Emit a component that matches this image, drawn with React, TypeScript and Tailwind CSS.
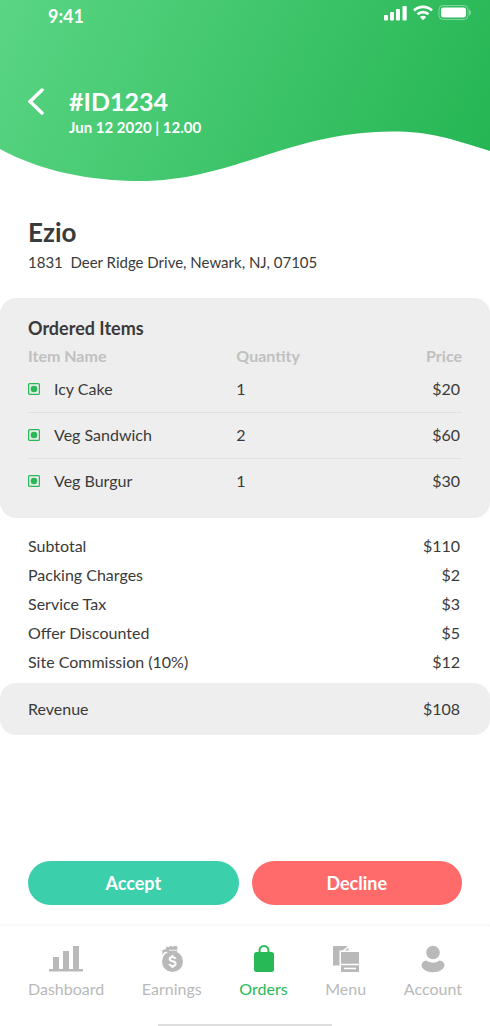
import { ReactNode } from "react"

interface OrderItem {
  name: string
  quantity: number
  price: string
}

interface NavItem {
  label: string
  icon: ReactNode
  active?: boolean
}

const items: OrderItem[] = [
  { name: "Icy Cake", quantity: 1, price: "$20" },
  { name: "Veg Sandwich", quantity: 2, price: "$60" },
  { name: "Veg Burgur", quantity: 1, price: "$30" },
]

const charges = [
  { label: "Subtotal", amount: "$110" },
  { label: "Packing Charges", amount: "$2" },
  { label: "Service Tax", amount: "$3" },
  { label: "Offer Discounted", amount: "$5" },
  { label: "Site Commission (10%)", amount: "$12" },
]

const DashboardIcon = () => (
  <svg width="34" height="28" viewBox="0 0 34 28" fill="currentColor" aria-hidden="true">
    <rect x="0" y="24" width="34" height="2.5" />
    <rect x="4" y="12" width="6" height="13" />
    <rect x="14" y="6" width="6" height="19" />
    <rect x="24" y="1" width="6" height="24" />
  </svg>
)

const EarningsIcon = () => (
  <svg width="24" height="28" viewBox="0 0 24 28" fill="currentColor" aria-hidden="true">
    <path d="M6.500 1.500l2 .8 2-1.500 2 1 2.200-1 2.800.7-.5 5.500H8.500L5 6.800 2 9.500l.6-3L1.500 5.800l4.500-2z" />
    <circle cx="12.500" cy="16.500" r="10.500" />
    <path d="M9 5.300h8" stroke="#fff" strokeWidth=".8" />
    <path
      d="M15.500 13.800c-.5-1.300-1.600-1.900-3-1.900-1.700 0-2.800.8-2.800 2.100 0 3 5.900 1.500 5.900 4.700 0 1.400-1.200 2.300-3 2.300-1.600 0-2.800-.7-3.300-2M12.500 10v2M12.500 21v2"
      fill="none"
      stroke="#fff"
      strokeWidth="2"
    />
  </svg>
)

const OrdersIcon = () => (
  <svg width="22" height="28" viewBox="0 0 22 28" aria-hidden="true">
    <rect x="1" y="7" width="20" height="20" rx="2.500" fill="currentColor" />
    <path d="M6.500 9V5.500a4.500 4.500 0 0 1 9 0V9" fill="none" stroke="currentColor" strokeWidth="2" />
  </svg>
)

const MenuIcon = () => (
  <svg width="28" height="28" viewBox="0 0 28 28" fill="currentColor" aria-hidden="true">
    <path d="M1 1h14.500v.5L10.500 5.500H7.500v15H1z" />
    <path d="M16.500 2.500V5.500h-3.500z" />
    <path d="M9 7h18v20H9z" />
    <path d="M9 19.500h18M12 23.500h12" stroke="#fff" strokeWidth="1.500" />
  </svg>
)

const AccountIcon = () => (
  <svg width="24" height="28" viewBox="0 0 24 28" fill="currentColor" aria-hidden="true">
    <circle cx="12" cy="7.500" r="6.800" />
    <path d="M5.500 15.500c2 1.400 4 2 6.500 2s4.500-.6 6.500-2c3 .4 5 2.200 5 4.500 0 4-5 7.200-11.500 7.200S.5 24 .5 20c0-2.300 2-4.100 5-4.500z" />
  </svg>
)

const VegMark = () => (
  <svg width="12" height="12" viewBox="0 0 12 12" aria-hidden="true">
    <rect x=".6" y=".6" width="10.800" height="10.800" rx="1" fill="none" stroke="#27b955" strokeWidth="1.200" />
    <circle cx="6" cy="6" r="3.300" fill="#27b955" />
  </svg>
)

const navItems: NavItem[] = [
  { label: "Dashboard", icon: <DashboardIcon /> },
  { label: "Earnings", icon: <EarningsIcon /> },
  { label: "Orders", icon: <OrdersIcon />, active: true },
  { label: "Menu", icon: <MenuIcon /> },
  { label: "Account", icon: <AccountIcon /> },
]

const StatusBar = () => (
  <div className="flex items-start justify-between pt-1 pr-[18px] pl-12">
    <span className="text-lg leading-6 font-bold">9:41</span>
    <div className="flex items-center gap-1">
      <svg width="25" height="18" viewBox="0 0 25 18" fill="currentColor" aria-hidden="true">
        <rect x="1" y="11" width="4" height="5.500" rx="1" />
        <rect x="7" y="8" width="4" height="8.500" rx="1" />
        <rect x="13" y="5" width="4" height="11.500" rx="1" />
        <rect x="19.500" y="2" width="4.200" height="14.500" rx="1" />
      </svg>
      <svg width="22" height="18" viewBox="0 0 22 18" aria-hidden="true">
        <path d="M2 6.500a13 13 0 0 1 18 0M5.500 10.300a8 8 0 0 1 11 0" fill="none" stroke="currentColor" strokeWidth="2.600" />
        <path d="M11 16.200l-3.100-3.100a4.500 4.500 0 0 1 6.200 0z" fill="currentColor" />
      </svg>
      <svg width="34" height="18" viewBox="0 0 34 18" aria-hidden="true">
        <rect x="1" y="1.500" width="29" height="14" rx="4" fill="none" stroke="currentColor" strokeOpacity=".4" />
        <rect x="3" y="3.500" width="25" height="10" rx="2.500" fill="currentColor" />
        <path d="M31 5.500v6c1.300-.5 2-1.600 2-3s-.7-2.500-2-3z" fill="currentColor" fillOpacity=".4" />
      </svg>
    </div>
  </div>
)

const Header = () => (
  <header className="bg-[linear-gradient(115deg,#5ad584,#24b552)] text-white">
    <StatusBar />
    <div className="flex items-start gap-6 px-7 pt-[57px]">
      <button type="button" aria-label="Back" className="mt-0.5 cursor-pointer">
        <svg width="17" height="28" viewBox="0 0 17 28" aria-hidden="true">
          <path d="M14 3L2 14.500 14 26" fill="none" stroke="currentColor" strokeWidth="3.500" strokeLinecap="round" />
        </svg>
      </button>
      <div>
        <h1 className="text-[25px] leading-8 font-bold">#ID1234</h1>
        <p className="text-[15px] leading-5 font-bold">Jun 12 2020 | 12.00</p>
      </div>
    </div>
    {/* white wave that closes the header */}
    <svg viewBox="0 0 490 54" preserveAspectRatio="none" className="-mt-2 block h-[54px] w-full" aria-hidden="true">
      <path d="M0 20C40 42 90 52 140 52C232 52 290 2.500 392 2.500C430 2.500 452 10 490 22V54H0z" fill="#fff" />
    </svg>
  </header>
)

const OrderedItems = () => (
  <section className="mt-[26px] rounded-2xl bg-[#eeeeee] px-7 pt-5 pb-[14px]">
    <h2 className="text-lg leading-5 font-bold">Ordered Items</h2>
    <table className="mt-2 w-full text-left text-base">
      <thead>
        <tr className="leading-5 text-[#c0c0c0]">
          <th className="w-[48%] font-bold">Item Name</th>
          <th className="font-bold">Quantity</th>
          <th className="text-right font-bold">Price</th>
        </tr>
      </thead>
      <tbody>
        {items.map((item, index) => (
          <tr key={index} className="h-[46px] border-b border-[#e0e0e0] last:border-0">
            <td>
              <div className="flex items-center gap-[14px]">
                <VegMark />
                {item.name}
              </div>
            </td>
            <td>{item.quantity}</td>
            <td className="pr-0.5 text-right">{item.price}</td>
          </tr>
        ))}
      </tbody>
    </table>
  </section>
)

const App = () => {
  return (
    <div className="flex min-h-screen flex-col bg-white font-['Lato',sans-serif] text-[#3a3a3a]">
      <Header />

      <main className="flex grow flex-col">
        <section className="px-7 pt-[33px]">
          <h2 className="text-[26px] leading-8 font-bold">Ezio</h2>
          <p className="mt-1 text-[15px] leading-5 whitespace-pre-wrap">{"1831  Deer Ridge Drive, Newark, NJ, 07105"}</p>
        </section>

        <OrderedItems />

        <dl className="px-7 pt-[13px] pb-[7px] text-base leading-[29px]">
          {charges.map((charge) => (
            <div key={charge.label} className="flex justify-between pr-0.5">
              <dt>{charge.label}</dt>
              <dd>{charge.amount}</dd>
            </div>
          ))}
        </dl>

        <div className="flex h-[52px] items-center justify-between rounded-2xl bg-[#eeeeee] pr-[30px] pl-7 text-base">
          <span>Revenue</span>
          <span>{"$108"}</span>
        </div>

        <div className="mt-auto flex gap-[13px] px-7 pt-6 pb-5 text-lg font-bold text-white">
          <button type="button" className="h-11 flex-1 cursor-pointer rounded-full bg-[#3ccfac]">Accept</button>
          <button type="button" className="h-11 flex-1 cursor-pointer rounded-full bg-[#ff6b6b]">Decline</button>
        </div>
      </main>

      <nav className="border-t border-[#f5f5f5] px-7 pt-[19px] shadow-[0_-1px_3px_rgba(0,0,0,0.03)]">
        <div className="flex justify-between">
          {navItems.map((item) => (
            <a
              key={item.label}
              href="#"
              aria-current={item.active ? "page" : undefined}
              className={`flex flex-col items-center gap-1.5 text-base leading-5 ${item.active ? "text-[#27b955]" : "text-[#b9b9b9]"}`}
            >
              {item.icon}
              {item.label}
            </a>
          ))}
        </div>
        <div className="mx-auto mt-[25px] h-0.5 w-[174px] bg-[#dedede]" />
      </nav>
    </div>
  )
}

export default App
